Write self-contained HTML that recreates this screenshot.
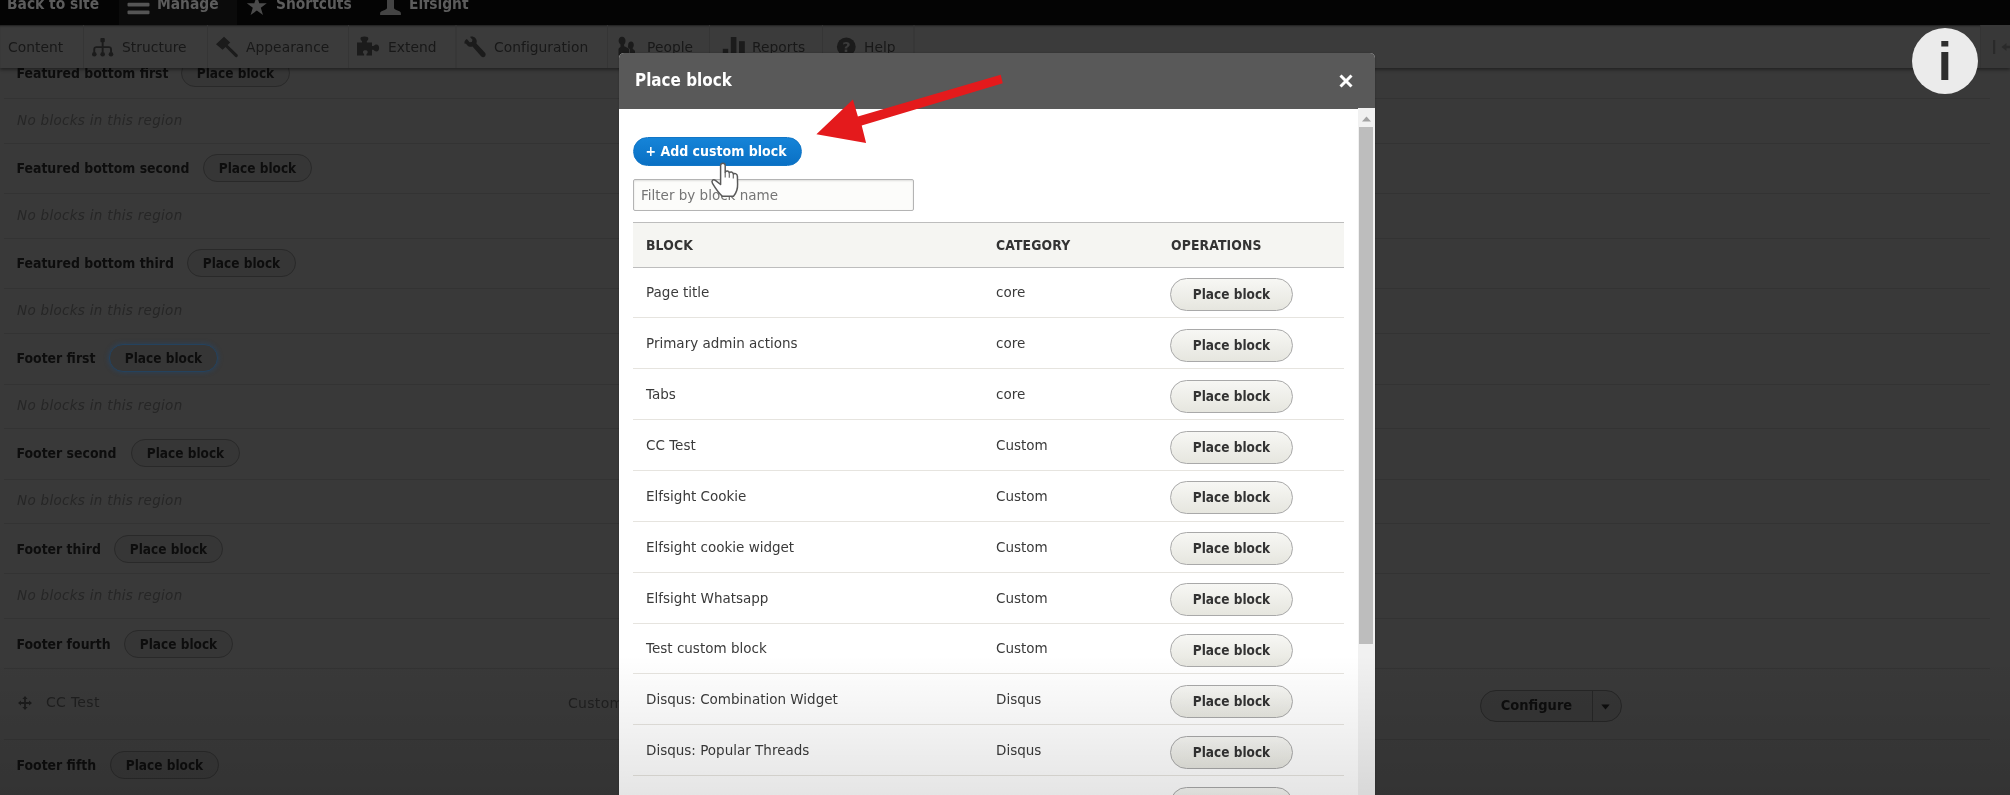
<!DOCTYPE html>
<html lang="en">
<head>
<meta charset="utf-8">
<title>Block layout | Drupal</title>
<style>
*{box-sizing:border-box;margin:0;padding:0}
html,body{width:2010px;height:795px;overflow:hidden;background:#393939;font-family:"DejaVu Sans","Liberation Sans",sans-serif;font-size:14px;color:#111}
.abs{position:absolute}
#stage{will-change:transform;position:relative;width:2010px;height:795px;overflow:hidden;background:#393939}
#bar1{left:0;top:0;width:2010px;height:25px;background:#040404}
#bar1 .tab{position:absolute;top:0;height:25px;background:#0b0b0b}
#bar1 span{position:absolute;top:-5.8px;font-family:"DejaVu Sans Condensed","DejaVu Sans","Liberation Sans",sans-serif;font-weight:bold;font-size:15.4px;line-height:20px;color:#5c5c5c;white-space:nowrap}
#bar2{left:0;top:25px;width:2010px;height:43px;background:#3b3b3b;box-shadow:0 2px 3px rgba(0,0,0,.38),inset 0 2px 2px -1px rgba(0,0,0,.5)}
#bar2 span{position:absolute;top:13px;font-size:13.8px;line-height:19px;color:#181818;white-space:nowrap;letter-spacing:.05px}
#bar2 i{position:absolute;top:0;width:1px;height:43px;background:#343434}
.ln{position:absolute;left:4px;width:1986px;height:1px;background:#333}
.rt{position:absolute;left:16.500px;font-family:"DejaVu Sans Condensed","DejaVu Sans","Liberation Sans",sans-serif;font-weight:bold;font-size:13.9px;line-height:20px;color:#0d0d0d;white-space:nowrap}
.nb{position:absolute;left:17px;font-style:italic;font-size:13.5px;line-height:20px;color:#262626;white-space:nowrap;letter-spacing:.3px}
.pb{position:absolute;height:28px;width:109px;border:1px solid #292929;border-radius:14px;background:#363636;font-family:"DejaVu Sans Condensed","DejaVu Sans","Liberation Sans",sans-serif;font-weight:bold;font-size:13.5px;line-height:26px;color:#0d0d0d;text-align:center;white-space:nowrap}
#modal{left:619px;top:53px;width:756px;height:760px;background:#fff;border-radius:5px 5px 0 0;overflow:hidden}
#mshadow{left:619px;top:53px;width:756px;height:760px;border-radius:6px 6px 0 0;box-shadow:0 0 2px rgba(0,0,0,.25)}
#mhead{left:0;top:0;width:756px;height:55.5px;background:#595959}
#mtitle{left:16px;top:14.3px;transform:scaleX(.955);transform-origin:0 50%;font-family:"DejaVu Sans Condensed","DejaVu Sans","Liberation Sans",sans-serif;font-weight:bold;font-size:17.7px;line-height:26px;color:#fff;white-space:nowrap}
#addbtn{left:14px;top:83.5px;width:169px;height:29px;border-radius:14.5px;background:linear-gradient(#1584d8,#0a70c4);border:1px solid #1276c6;color:#fff;font-family:"DejaVu Sans Condensed","DejaVu Sans","Liberation Sans",sans-serif;font-weight:bold;font-size:14px;line-height:27px;text-align:center;text-indent:-3px;white-space:nowrap}
#filter{left:14px;top:126px;width:281px;height:32px;border:1px solid #b4b4b4;background:#fcfcfa;border-radius:2px;box-shadow:inset 0 1px 2px rgba(0,0,0,.12);font-size:13.5px;line-height:30px;color:#757575;padding-left:7px;white-space:nowrap}
#thead{left:14px;top:169px;width:711px;height:46px;background:#f5f5f2;border-top:1px solid #bdbdbd;border-bottom:1px solid #bdbdbd}
#thead span{position:absolute;top:13px;font-family:"DejaVu Sans Condensed","DejaVu Sans","Liberation Sans",sans-serif;font-weight:bold;font-size:13.8px;letter-spacing:.15px;line-height:18px;color:#333;white-space:nowrap}
.row{position:absolute;left:14px;width:711px;height:51px;border-bottom:1px solid #e6e4df}
.row span{position:absolute;top:15px;font-size:13.5px;line-height:20px;color:#3a3a3a;white-space:nowrap}
.row b{position:absolute;left:537px;top:10.8px;width:123px;height:33px;border:1px solid #a9a9a9;border-radius:16.5px;background:linear-gradient(#f7f7f4,#e6e6df);font-family:"DejaVu Sans Condensed","DejaVu Sans","Liberation Sans",sans-serif;font-weight:bold;font-size:13.5px;line-height:30px;color:#333;text-align:center;white-space:nowrap}
#sb{left:739px;top:55px;width:17px;height:720px;background:#f1f1f1}
#sbthumb{left:1px;top:19px;width:14px;height:517px;background:#bdbdbd}
#fade{left:0;top:655px;width:2010px;height:140px;background:linear-gradient(rgba(0,0,0,0),rgba(0,0,0,.10))}
</style>
</head>
<body>
<div id="stage">
<div class="ln" style="top:98px"></div>
<div class="ln" style="top:142.5px"></div>
<div class="ln" style="top:193px"></div>
<div class="ln" style="top:237.5px"></div>
<div class="ln" style="top:288px"></div>
<div class="ln" style="top:333px"></div>
<div class="ln" style="top:383.5px"></div>
<div class="ln" style="top:428px"></div>
<div class="ln" style="top:478.5px"></div>
<div class="ln" style="top:523px"></div>
<div class="ln" style="top:573px"></div>
<div class="ln" style="top:617.5px"></div>
<div class="ln" style="top:668px"></div>
<div class="ln" style="top:739px"></div>
<div class="rt" style="top:63px">Featured bottom first</div><div class="pb" style="left:181px;top:59px">Place block</div>
<div class="rt" style="top:158px">Featured bottom second</div><div class="pb" style="left:203px;top:154px">Place block</div>
<div class="rt" style="top:253px">Featured bottom third</div><div class="pb" style="left:187px;top:249px">Place block</div>
<div class="rt" style="top:348px">Footer first</div><div class="pb" style="left:109px;top:344px;border-color:#24425e;box-shadow:0 0 4px 1px rgba(30,75,120,.42)">Place block</div>
<div class="rt" style="top:443px">Footer second</div><div class="pb" style="left:131px;top:439px">Place block</div>
<div class="rt" style="top:539px">Footer third</div><div class="pb" style="left:114px;top:535px">Place block</div>
<div class="rt" style="top:634px">Footer fourth</div><div class="pb" style="left:124px;top:630px">Place block</div>
<div class="rt" style="top:755px">Footer fifth</div><div class="pb" style="left:110px;top:751px">Place block</div>
<div class="nb" style="top:110px">No blocks in this region</div>
<div class="nb" style="top:205px">No blocks in this region</div>
<div class="nb" style="top:300px">No blocks in this region</div>
<div class="nb" style="top:395px">No blocks in this region</div>
<div class="nb" style="top:490px">No blocks in this region</div>
<div class="nb" style="top:585px">No blocks in this region</div>

<div class="abs" style="left:18px;top:696px;width:14px;height:14px"><svg width="14" height="14" viewBox="0 0 14 14"><path d="M7 0l2.6 3H7.9v3.1H11V4.4L14 7l-3 2.6V7.9H7.9V11h1.7L7 14 4.4 11h1.7V7.9H3v1.7L0 7l3-2.6v1.7h3.1V3H4.4z" fill="#1c1c1c"/></svg></div>
<div class="abs" style="left:46px;top:692px;font-size:14px;line-height:20px;color:#1f1f1f;letter-spacing:.3px">CC Test</div>
<div class="abs" style="left:568px;top:693px;font-size:14px;line-height:20px;color:#1f1f1f;letter-spacing:.3px">Custom</div>
<div class="abs" id="cfg" style="left:1480px;top:690px;width:142px;height:32px;border:1px solid #262626;border-radius:16px;background:#353535;overflow:hidden">
 <span style="position:absolute;left:0;top:0;width:112px;height:30px;border-right:1px solid #262626;text-align:center;font-family:'DejaVu Sans Condensed','DejaVu Sans',sans-serif;font-weight:bold;font-size:14.5px;line-height:29px;color:#0d0d0d">Configure</span>
 <svg style="position:absolute;left:120px;top:12.500px" width="9" height="6" viewBox="0 0 9 6"><path d="M0.3 0.500h8.400L4.500 5.500z" fill="#0d0d0d"/></svg>
</div>

<div id="bar2" class="abs">
<svg class="abs" style="left:0;top:0" width="930" height="43" viewBox="0 25 930 43">
 <g fill="#1b1b1b" stroke="none">
  <!-- structure -->
  <rect x="100.400" y="38" width="4.400" height="4.200" rx="1"/>
  <path d="M101.700 41h1.900v5.200h5.200c2 0 3.200 1.200 3.200 3.200v3h-1.900v-3c0-.9-.4-1.300-1.300-1.300h-5.200v4.300h-1.900v-4.300h-5.200c-.9 0-1.300 .4-1.300 1.300v3h-1.900v-3c0-2 1.200-3.200 3.200-3.200h5.200z"/>
  <circle cx="94.300" cy="54.200" r="2.300"/><circle cx="102.650" cy="54.200" r="2.300"/><circle cx="111" cy="54.200" r="2.300"/>
  <!-- brush -->
  <path d="M216 44.300l8-7.600 6.200 5.800-2.600 2.600 9.600 9.200c.8 .8 .8 1.700 .1 2.400-.7 .7-1.700 .7-2.400-.1l-9.400-9.600-2.900 2.800z"/>
  <!-- puzzle -->
  <path d="M357 42.500h5v-1.600c-1.300-.7-1.500-1.900-1.500-2.500 0-1 1.200-1.800 3.900-1.800s3.900 .8 3.900 1.800c0 .6-.2 1.800-1.500 2.500v1.600h5.200v3.600h1.500c.8-1.200 1.900-1.700 3-1.700 1.600 0 2.600 1.400 2.600 3.500s-1 3.500-2.600 3.500c-1.100 0-2.200-.5-3-1.700h-1.500v5.900h-5.500v-1.600c1-.6 1.200-1.500 1.200-2.100 0-1-1-1.700-2.400-1.700s-2.400 .7-2.400 1.700c0 .6 .2 1.500 1.200 2.100v1.600h-7.100z"/>
  <!-- wrench -->
  <path d="M464.600 41.500c-.5-2.300 .3-3.700 1.600-4.800l.9 .1 2.500 3 2.300-.3 .6-2.300-2.400-2.800c1.700-.7 3.800-.2 5.200 1.200 1.500 1.500 1.800 3.400 1.100 5.300l8.400 9.200c1.200 1.300 1.100 2.900 .1 3.900-1.100 1-2.700 .9-3.800-.3l-8.600-9.600c-2.200 .5-4-.1-5.300-1.400-1-1-1.800-2.300-2.600-1.200z" transform="translate(0,2.500)"/>
  <!-- people -->
  <path d="M622 36.800c2.200 0 3.500 1.700 3.500 4 0 1.500-.5 2.900-1.400 3.800v1.700c1.500 .6 4.200 1.600 5 2.700v6.500h-10.600v-6.500c.3-.9 .9-1.600 2-2.100v-2.300c-.9-.9-1.900-2.300-1.900-3.800 0-2.300 1.200-4 3.400-4z"/>
  <path d="M631 41.500c1.700 0 2.800 1.400 2.800 3.300 0 1.200-.4 2.300-1.100 3v1.300c1.200 .5 2 1.200 2.300 2.200v4.200h-5v-6c.1-.5-1.700-1.300-1.700-1.700-.7-.7-.1-1.800-.1-3 0-1.900 1.100-3.300 2.800-3.300z"/>
  <!-- reports -->
  <rect x="722.800" y="48.800" width="5.400" height="5.200"/><rect x="730.800" y="37" width="5.600" height="17"/><rect x="739" y="41.200" width="5.800" height="12.800"/>
  <!-- help -->
  <circle cx="846.300" cy="46.800" r="9.400"/>
 </g>
 <text x="842.300" y="52.300" font-family="'DejaVu Sans',sans-serif" font-weight="bold" font-size="14.500" fill="#3b3b3b">?</text>
 <g fill="#353535"><rect x="83" y="25" width="1" height="43"/><rect x="207" y="25" width="1" height="43"/><rect x="348" y="25" width="1" height="43"/><rect x="455.500" y="25" width="1" height="43"/><rect x="607" y="25" width="1" height="43"/><rect x="709" y="25" width="1" height="43"/><rect x="822" y="25" width="1" height="43"/><rect x="913.500" y="25" width="1" height="43"/></g>
</svg>
 <div class="abs" style="left:1980px;top:0;width:1px;height:43px;background:#343434"></div><div class="abs" style="left:1981px;top:0;width:29px;height:43px;background:#383838"></div><svg class="abs" style="left:1990px;top:14px" width="20" height="16" viewBox="0 0 20 16"><rect x="3" y="1" width="2.200" height="14" fill="#2a2a2a"/><path d="M11.500 8l5-4v2.800h6v2.400h-6V12z" fill="#2a2a2a"/></svg>
 <span style="left:8px">Content</span>
 <span style="left:122px">Structure</span>
 <span style="left:246px">Appearance</span>
 <span style="left:388px">Extend</span>
 <span style="left:494px">Configuration</span>
 <span style="left:647px">People</span>
 <span style="left:752px">Reports</span>
 <span style="left:864px">Help</span>
</div>
<div id="bar1" class="abs">
 <div class="tab" style="left:118.500px;width:118px"></div>
<svg class="abs" style="left:0;top:0" width="480" height="25" viewBox="0 0 480 25">
 <g fill="#555"><rect x="127.500" y="2.800" width="22" height="3.600" rx="1"/><rect x="127.500" y="10.400" width="22" height="3.800" rx="1"/><rect x="127.500" y="-4.800" width="22" height="3.600" rx="1"/></g>
 <polygon fill="#4a4a4a" points="256.800,-4 259.300,3.200 266.800,3.200 260.800,7.800 263,14.900 256.800,10.600 250.600,14.900 252.800,7.800 246.800,3.200 254.300,3.200"/>
 <path fill="#444" d="M387 -2h7v9.500c0 1.200 .6 1.800 1.800 2.200l3.600 1.500c1.100 .5 1.500 1.200 1.500 2.300v1.400h-20.800v-1.400c0-1.100 .4-1.800 1.500-2.300l3.600-1.500c1.200-.4 1.800-1 1.800-2.200z"/>
</svg>
 <span style="left:7px">Back to site</span>
 <span style="left:157px">Manage</span>
 <span style="left:276px">Shortcuts</span>
 <span style="left:409px">Elfsight</span>
</div>
<div id="mshadow" class="abs"></div>
<div id="modal" class="abs">
 <div id="mhead" class="abs"><div id="mtitle" class="abs">Place block</div><svg class="abs" style="left:719px;top:20px" width="16" height="16" viewBox="0 0 16 16"><path d="M2.5 2.5l11 11M13.500 2.500l-11 11" stroke="#fff" stroke-width="3" fill="none"/></svg></div>
 <div id="addbtn" class="abs">+ Add custom block</div>
 <div id="filter" class="abs">Filter by block name</div>
 <div id="thead" class="abs"><span style="left:13px">BLOCK</span><span style="left:363px">CATEGORY</span><span style="left:538px">OPERATIONS</span></div>
<div class="row" style="top:214.2px"><span style="left:13px">Page title</span><span style="left:363px">core</span><b>Place block</b></div>
<div class="row" style="top:265.1px"><span style="left:13px">Primary admin actions</span><span style="left:363px">core</span><b>Place block</b></div>
<div class="row" style="top:316.0px"><span style="left:13px">Tabs</span><span style="left:363px">core</span><b>Place block</b></div>
<div class="row" style="top:366.8px"><span style="left:13px">CC Test</span><span style="left:363px">Custom</span><b>Place block</b></div>
<div class="row" style="top:417.7px"><span style="left:13px">Elfsight Cookie</span><span style="left:363px">Custom</span><b>Place block</b></div>
<div class="row" style="top:468.6px"><span style="left:13px">Elfsight cookie widget</span><span style="left:363px">Custom</span><b>Place block</b></div>
<div class="row" style="top:519.5px"><span style="left:13px">Elfsight Whatsapp</span><span style="left:363px">Custom</span><b>Place block</b></div>
<div class="row" style="top:570.4px"><span style="left:13px">Test custom block</span><span style="left:363px">Custom</span><b>Place block</b></div>
<div class="row" style="top:621.2px"><span style="left:13px">Disqus: Combination Widget</span><span style="left:363px">Disqus</span><b>Place block</b></div>
<div class="row" style="top:672.1px"><span style="left:13px">Disqus: Popular Threads</span><span style="left:363px">Disqus</span><b>Place block</b></div>
<div class="row" style="top:723.0px"><span style="left:13px">Disqus: Recent Comments</span><span style="left:363px">Disqus</span><b>Place block</b></div>
 <div id="sb" class="abs"><svg class="abs" style="left:4px;top:8px" width="9" height="6" viewBox="0 0 9 6"><path d="M0 5.500L4.500 0.500L9 5.500z" fill="#a3a3a3"/></svg><div id="sbthumb" class="abs"></div></div>
</div>

<svg class="abs" style="left:800px;top:60px" width="220" height="100" viewBox="800 60 220 100"><polygon points="816.4,134.2 852.9,99.6 857.9,116.6 1000.7,74.8 1002.8,83.3 861.7,125.4 866.1,143" fill="#e41a1c"/></svg>
<svg class="abs" style="left:706px;top:158px" width="38" height="44" viewBox="706 158 38 44"><path d="M720.600 182.500V165.500C720.600 162.400 725.200 162.400 725.200 165.500V172.600C725.600 170.400 729.200 170.600 729.300 173.100C729.800 171.300 733.200 171.700 733.300 174.300C734 172.900 737.300 173.300 737.400 176.300L737.600 184C737.800 189.500 736 193.300 733.500 196.300H722.500C719 193.300 715.600 188.500 712.500 183.300C711 180.700 713.200 178.800 715.400 180.400L720.600 184.500Z" fill="#fff" stroke="#5a5a5a" stroke-width="1.500" stroke-linejoin="round"/><path d="M725.200 172.600v5M729.300 173.500v4.300M733.300 174.800v3.600" stroke="#6a6a6a" stroke-width="1.200" fill="none"/></svg>
<div class="abs" style="left:1912.300px;top:28px;width:65.700px;height:66px;border-radius:33px;background:#ebebeb"></div>
<div class="abs" id="info-i" style="left:1911.800px;top:32px;width:66px;height:66px;text-align:center;font-family:'Liberation Sans',sans-serif;font-weight:bold;font-size:51px;line-height:60px;color:#2e2e2e;transform:scaleY(1.06);transform-origin:50% 50%">i</div>

<div id="fade" class="abs"></div>
</div>
</body>
</html>
